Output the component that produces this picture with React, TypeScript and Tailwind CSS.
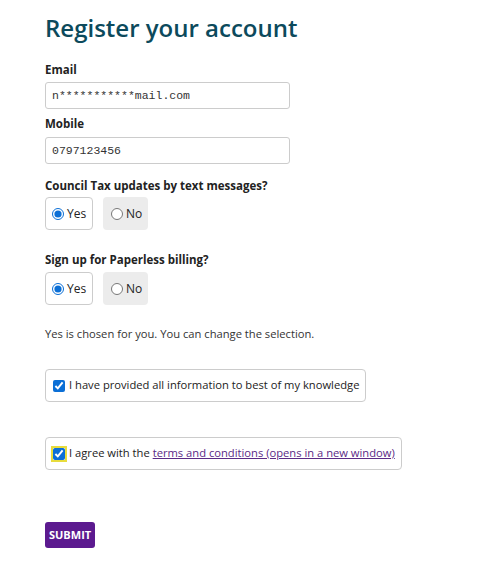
import React from "react";

const font = { fontFamily: '"Open Sans", "Liberation Sans", sans-serif' };

function RadioGroup({ name, top }: { name: string; top: string }) {
  return (
    <div className={`flex gap-[10px] ${top}`}>
      <label className="flex items-center gap-[3px] h-[33px] w-[48px] pl-[6px] border border-[#ccc] rounded-[4px] bg-white text-[12px] text-[#222]">
        <input type="radio" name={name} defaultChecked className="m-0 w-[12px] h-[12px] accent-[#0b6fd6]" />
        Yes
      </label>
      <label className="flex items-center gap-[3px] h-[33px] w-[45px] pl-[8px] rounded-[4px] bg-[#ececec] text-[12px] text-[#222]">
        <input type="radio" name={name} className="m-0 w-[12px] h-[12px] accent-[#0b6fd6]" />
        No
      </label>
    </div>
  );
}

export default function App() {
  return (
    <div className="min-h-[567px] bg-white pl-[45px] pt-[12px]" style={font}>
      <h1 className="text-[24px] font-semibold text-[#0c4a5c] leading-[32px]">
        Register your account
      </h1>

      <div className="mt-[18px] text-[11.5px] font-bold text-[#222] leading-[16px]">Email</div>
      <input
        readOnly
        value="n***********mail.com"
        className="mt-[4px] block w-[245px] h-[27px] px-[6px] border border-[#ccc] rounded-[3px] text-[11.5px] text-[#333] outline-none"
        style={{ fontFamily: '"Liberation Mono", monospace' }}
      />

      <div className="mt-[7px] text-[11.5px] font-bold text-[#222] leading-[16px]">Mobile</div>
      <input
        readOnly
        value="0797123456"
        className="mt-[5px] block w-[245px] h-[27px] px-[6px] border border-[#ccc] rounded-[3px] text-[11.5px] text-[#333] outline-none"
        style={{ fontFamily: '"Liberation Mono", monospace' }}
      />

      <div className="mt-[14px] text-[11.5px] font-bold text-[#222] leading-[16px]">
        Council Tax updates by text messages?
      </div>
      <RadioGroup name="council" top="mt-[3px]" />

      <div className="mt-[22px] text-[11.5px] font-bold text-[#222] leading-[16px]">
        Sign up for Paperless billing?
      </div>
      <RadioGroup name="paperless" top="mt-[4px]" />

      <p className="mt-[21px] text-[11.2px] text-[#333] leading-[16px]">
        Yes is chosen for you. You can change the selection.
      </p>

      <label className="mt-[27px] flex items-center gap-[4px] w-[321px] h-[33px] pl-[7px] border border-[#ccc] rounded-[4px] text-[11.2px] text-[#222] whitespace-nowrap">
        <input type="checkbox" defaultChecked className="m-0 w-[12px] h-[12px] accent-[#0b6fd6]" />
        I have provided all information to best of my knowledge
      </label>

      <label className="mt-[35px] flex items-center gap-[4px] w-[357px] h-[33px] pl-[7px] border border-[#ccc] rounded-[4px] text-[11.2px] text-[#222] whitespace-nowrap">
        <input
          type="checkbox"
          defaultChecked
          className="m-0 w-[12px] h-[12px] accent-[#0b6fd6] outline-[2px] outline-solid outline-[#e8dc3c]"
        />
        <span>
          I agree with the{" "}
          <a href="#" className="text-[#5b2a86] underline">
            terms and conditions (opens in a new window)
          </a>
        </span>
      </label>

      <button className="mt-[52px] h-[26px] px-[4px] bg-[#5c1a8f] rounded-[3px] text-white text-[11px] font-bold">
        SUBMIT
      </button>
    </div>
  );
}
